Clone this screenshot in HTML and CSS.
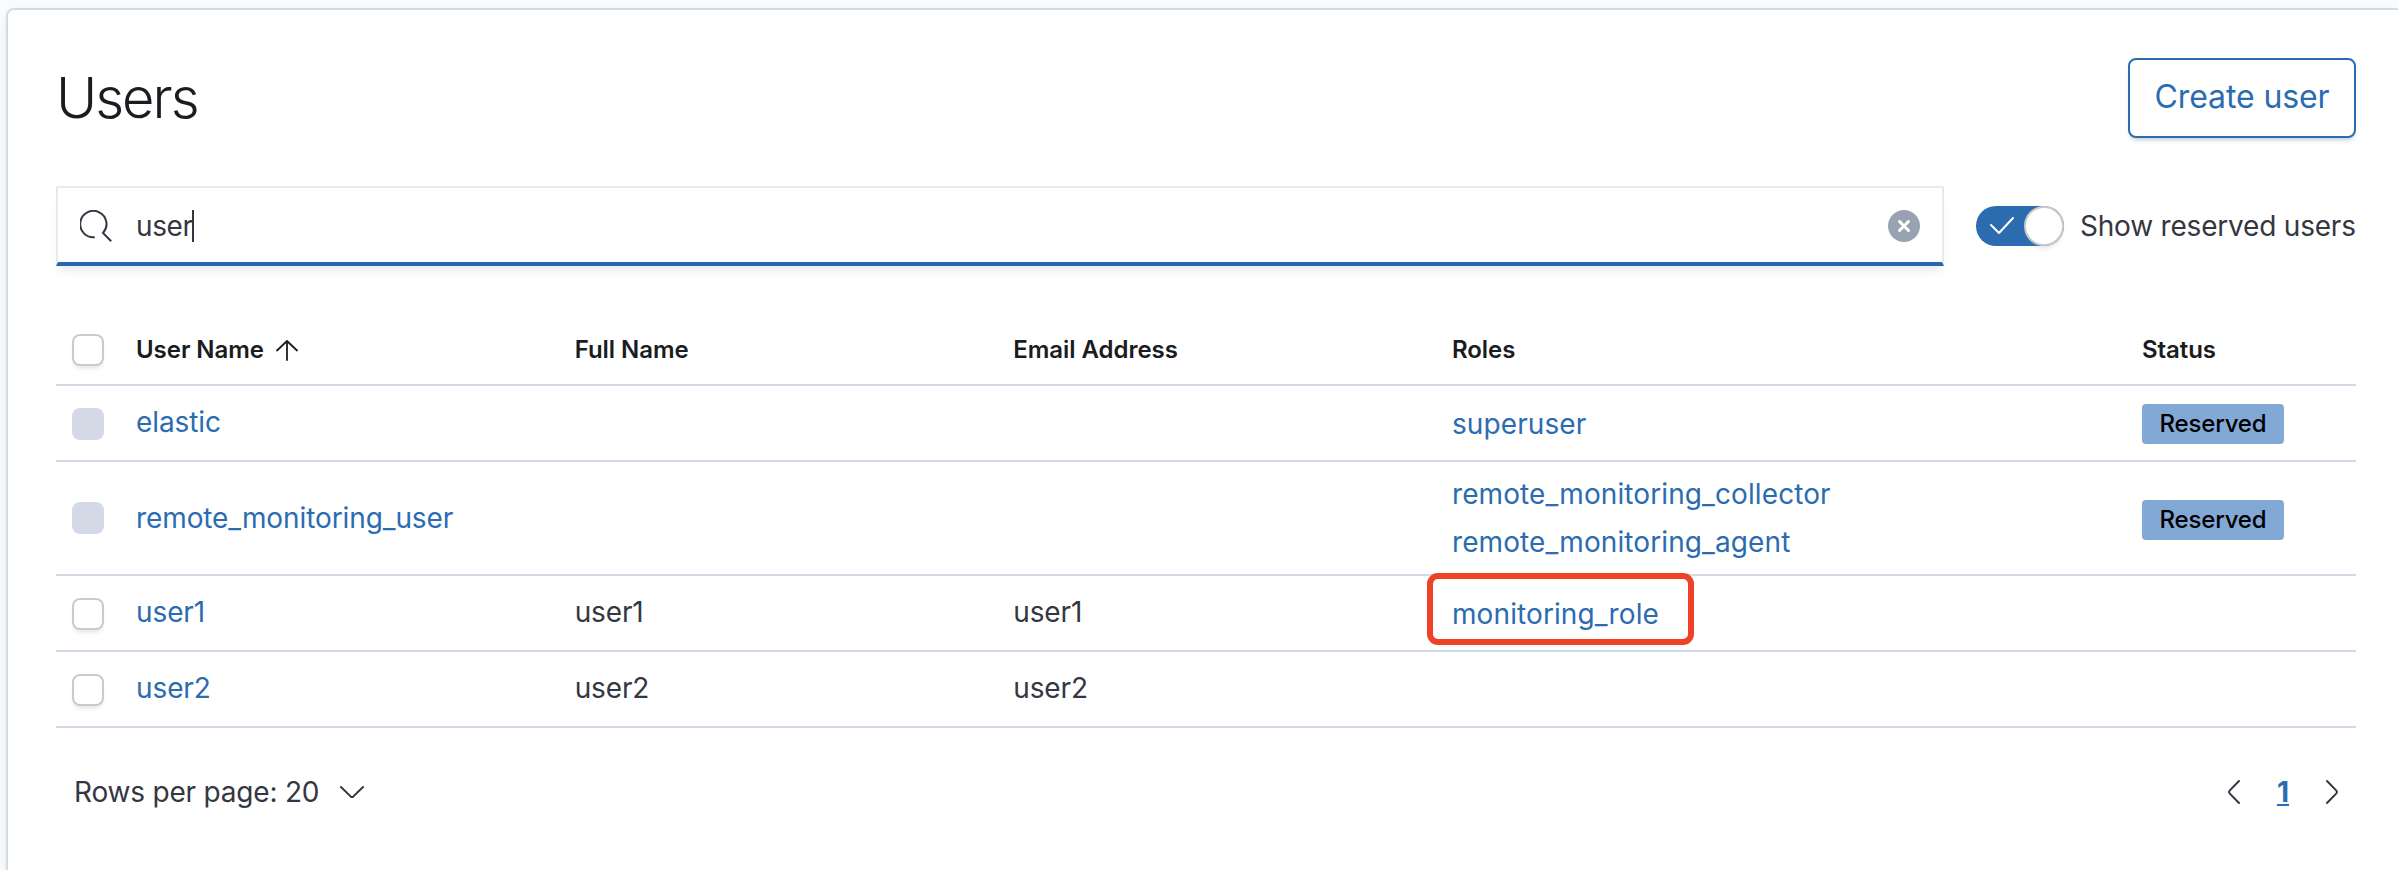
FILE: index.html
```html
<!DOCTYPE html>
<html lang="en">
<head>
<meta charset="utf-8">
<title>Users</title>
<link rel="stylesheet" href="styles.css">
</head>
<body>
<main class="panel">
  <header class="header">
    <h1 class="title">Users</h1>
    <button class="create" type="button">Create user</button>
  </header>

  <div class="toolbar">
    <div class="search">
      <svg class="search-icon" width="32" height="32" viewBox="0 0 16 16" fill="none" stroke="#343741"><path d="M7.4 13.57A6.58 6.58 0 1 1 11.5 11.5L15.6 15.6"/></svg>
      <span class="query">user</span><span class="caret"></span>
      <svg class="clear" width="32" height="32" viewBox="0 0 32 32"><circle cx="16" cy="16" r="16" fill="#98a2b3"/><path d="M11.5 11.5l9 9M20.5 11.5l-9 9" stroke="#fff" stroke-width="3" stroke-linecap="round"/></svg>
    </div>
    <div class="switch">
      <span class="track">
        <svg class="tick" width="24" height="18" viewBox="0 0 24 18" fill="none" stroke="#fff" stroke-width="2" stroke-linecap="round" stroke-linejoin="round"><path d="M1 8l8 8L23 1"/></svg>
        <span class="thumb"></span>
      </span>
      <span class="switch-label">Show reserved users</span>
    </div>
  </div>

  <div class="table">
    <div class="row head">
      <div class="cell check"><span class="box"></span></div>
      <div class="cell">User Name<svg class="sort" width="22" height="21" viewBox="0 0 22 21" fill="none" stroke="#1a1c21" stroke-width="1.8" stroke-linecap="round" stroke-linejoin="round"><path d="M11 20V1M1 10.5L11 1l10 9.5"/></svg></div>
      <div class="cell">Full Name</div>
      <div class="cell">Email Address</div>
      <div class="cell">Roles</div>
      <div class="cell">Status</div>
    </div>
    <div class="row">
      <div class="cell check"><span class="box disabled"></span></div>
      <div class="cell link">elastic</div>
      <div class="cell"></div>
      <div class="cell"></div>
      <div class="cell roles"><span>superuser</span></div>
      <div class="cell status"><span class="badge">Reserved</span></div>
    </div>
    <div class="row tall">
      <div class="cell check"><span class="box disabled"></span></div>
      <div class="cell link">remote_monitoring_user</div>
      <div class="cell"></div>
      <div class="cell"></div>
      <div class="cell roles"><span>remote_monitoring_collector</span><span>remote_monitoring_agent</span></div>
      <div class="cell status"><span class="badge">Reserved</span></div>
    </div>
    <div class="row">
      <div class="cell check"><span class="box"></span></div>
      <div class="cell link">user1</div>
      <div class="cell">user1</div>
      <div class="cell">user1</div>
      <div class="cell roles"><span>monitoring_role</span><i class="highlight"></i></div>
      <div class="cell"></div>
    </div>
    <div class="row">
      <div class="cell check"><span class="box"></span></div>
      <div class="cell link">user2</div>
      <div class="cell">user2</div>
      <div class="cell">user2</div>
      <div class="cell"></div>
      <div class="cell"></div>
    </div>
  </div>

  <footer class="footer">
    <div class="per-page">Rows per page: 20
      <svg width="26" height="14" viewBox="0 0 26 14" fill="none" stroke="#343741" stroke-width="2" stroke-linecap="round" stroke-linejoin="round"><path d="M2 2l9.6 9.4q1.4 1.2 2.8 0L24 2"/></svg>
    </div>
    <div class="pages">
      <svg width="14" height="26" viewBox="0 0 14 26" fill="none" stroke="#343741" stroke-width="2" stroke-linecap="round" stroke-linejoin="round"><path d="M12 2L2.6 11.6q-1.2 1.4 0 2.8L12 24"/></svg>
      <span class="current">1</span>
      <svg width="14" height="26" viewBox="0 0 14 26" fill="none" stroke="#343741" stroke-width="2" stroke-linecap="round" stroke-linejoin="round"><path d="M2 2l9.4 9.6q1.2 1.4 0 2.8L2 24"/></svg>
    </div>
  </footer>
</main>
</body>
</html>
```
FILE: styles.css
```css
* {
  box-sizing: border-box;
}

html {
  height: 870px;
  overflow: hidden;
}

body {
  margin: 0;
  height: 870px;
  overflow: hidden;
  padding: 8px 0 0 6px;
  background: #fafbfd;
  color: #343741;
  font: 400 28px/42px Inter, sans-serif;
  letter-spacing: -0.005em;
}

.panel {
  width: 2402px;
  height: 868px;
  padding: 48px 50px 0 48px;
  background: #fff;
  border: 2px solid #d3dae6;
  border-radius: 8px;
  box-shadow: 0 4px 8px rgba(152, 162, 179, 0.2);
}

.header {
  display: flex;
  justify-content: space-between;
  align-items: center;
  height: 80px;
}

.title {
  margin: 0;
  font-size: 56px;
  line-height: 80px;
  font-weight: 300;
  letter-spacing: -0.036em;
  color: #1a1c21;
}

.create {
  width: 228px;
  height: 80px;
  padding: 0 0 2px;
  border: 2px solid #2b6cb0;
  border-radius: 8px;
  background: #fff;
  color: #2b6cb0;
  font: 400 32px/48px Inter, sans-serif;
  letter-spacing: -0.003em;
  white-space: nowrap;
  box-shadow: 0 4px 4px -2px rgba(54, 97, 126, 0.3);
}

.toolbar {
  display: flex;
  align-items: center;
  gap: 32px;
  margin-top: 48px;
}

.search {
  display: flex;
  flex: none;
  align-items: center;
  width: 1888px;
  height: 80px;
  padding: 2px 22px 0;
  border: 2px solid #e5e9f0;
  border-bottom: 4px solid #2668ae;
  box-shadow: 0 8px 8px -4px rgba(152, 162, 179, 0.25);
}

.search-icon {
  margin-right: 24px;
}

.query {
  letter-spacing: -0.4px;
}

.caret {
  width: 2px;
  height: 32px;
  margin-left: -1px;
  background: #343741;
}

.clear {
  margin-left: auto;
}

.switch {
  display: flex;
  align-items: center;
  gap: 16px;
}

.track {
  display: flex;
  flex: none;
  align-items: center;
  justify-content: space-between;
  width: 88px;
  height: 40px;
  padding-left: 14px;
  border-radius: 20px;
  background: #2b6cb0;
}

.thumb {
  width: 40px;
  height: 40px;
  border: 2px solid #c9cbcd;
  border-radius: 50%;
  background: #fff;
  box-shadow: 0 4px 4px -2px rgba(152, 162, 179, 0.3);
}

.switch-label {
  width: 276px;
  letter-spacing: -0.2px;
  white-space: nowrap;
}

.table {
  margin-top: 48px;
}

.row {
  display: grid;
  grid-template-columns: 64px repeat(3, 438.67px) 690px 230px;
  height: 76px;
  border-bottom: 2px solid #d3dae6;
}

.head {
  height: 72px;
  color: #1a1c21;
  font-size: 24px;
  font-weight: 600;
  line-height: 36px;
  letter-spacing: -0.05px;
}

.tall {
  height: 114px;
}

.cell {
  position: relative;
  display: flex;
  align-items: center;
  padding: 0 16px 2px;
}

.head .cell,
.check {
  padding: 2px 16px 0;
}

.link {
  letter-spacing: -0.1px;
}

.tall .link,
.tall .check {
  padding: 0 16px;
}

.roles {
  flex-direction: column;
  justify-content: center;
  align-items: flex-start;
  padding: 2px 16px 0;
  line-height: 48px;
  letter-spacing: 0.1px;
}

.tall .roles {
  padding-top: 0;
}

.link,
.roles {
  color: #2b6cb0;
}

.status {
  padding: 2px 16px 0;
}

.tall .status {
  padding-top: 4px;
}

.box {
  width: 32px;
  height: 32px;
  border: 2px solid #c9cbcd;
  border-radius: 8px;
  background: #fff;
  box-shadow: 0 4px 4px -2px rgba(152, 162, 179, 0.3);
}

.disabled {
  border-color: #d3dae6;
  background: #d3dae6;
  box-shadow: none;
}

.sort {
  margin-left: 12px;
}

.badge {
  width: 142px;
  height: 40px;
  border-radius: 4px;
  background: #82a9d6;
  color: #000;
  font-size: 24px;
  font-weight: 500;
  line-height: 39px;
  text-align: center;
  letter-spacing: -0.15px;
}

.highlight {
  position: absolute;
  left: -9px;
  top: -3px;
  width: 267px;
  height: 72px;
  border: 6px solid #ee4227;
  border-radius: 11px;
}

.footer {
  display: flex;
  justify-content: space-between;
  align-items: center;
  height: 48px;
  margin-top: 40px;
  padding: 0 17px 0 18px;
}

.per-page {
  display: flex;
  align-items: center;
  gap: 20px;
  letter-spacing: -0.2px;
}

.pages {
  display: flex;
  align-items: center;
  gap: 35px;
}

.current {
  width: 14px;
  color: #2b6cb0;
  font-weight: 700;
  letter-spacing: 0;
  text-align: center;
  text-decoration: underline;
}
```
